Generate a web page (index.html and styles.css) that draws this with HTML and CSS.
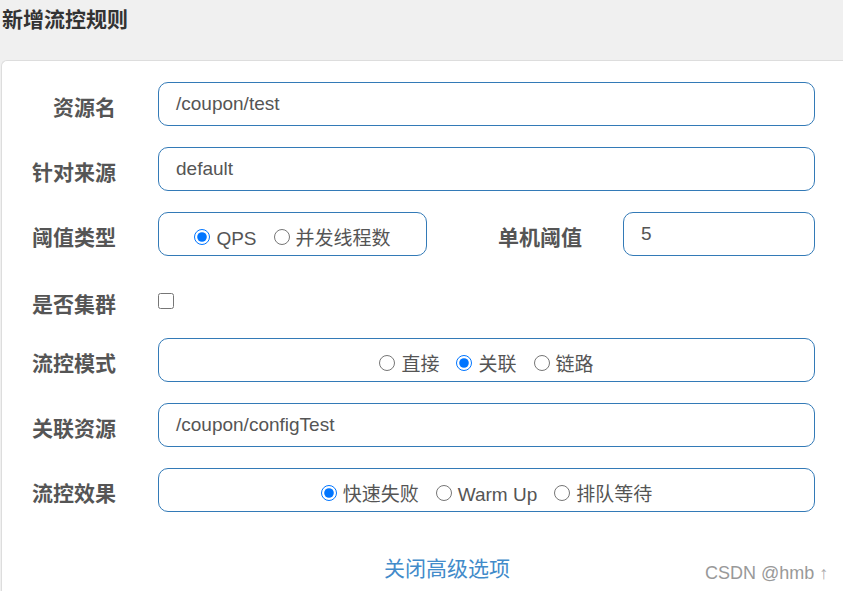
FILE: index.html
```html
<!DOCTYPE html>
<html lang="zh">
<head>
<meta charset="utf-8">
<title>新增流控规则</title>
<link rel="stylesheet" href="styles.css">
</head>
<body>
<div class="header"><h1 class="title">新增流控规则</h1></div>
<div class="panel">
  <div class="row">
    <label class="label">资源名</label>
    <div class="field full"><span class="value">/coupon/test</span></div>
  </div>
  <div class="row">
    <label class="label">针对来源</label>
    <div class="field full"><span class="value">default</span></div>
  </div>
  <div class="row">
    <label class="label">阈值类型</label>
    <div class="field type radios">
      <label class="opt"><input type="radio" name="grade" checked>QPS</label>
      <label class="opt"><input type="radio" name="grade">并发线程数</label>
    </div>
    <label class="label label-mid">单机阈值</label>
    <div class="field count"><span class="value">5</span></div>
  </div>
  <div class="row row-check">
    <label class="label">是否集群</label>
    <input class="check" type="checkbox">
  </div>
  <div class="row">
    <label class="label">流控模式</label>
    <div class="field full radios">
      <label class="opt"><input type="radio" name="mode">直接</label>
      <label class="opt"><input type="radio" name="mode" checked>关联</label>
      <label class="opt"><input type="radio" name="mode">链路</label>
    </div>
  </div>
  <div class="row">
    <label class="label">关联资源</label>
    <div class="field full"><span class="value">/coupon/configTest</span></div>
  </div>
  <div class="row">
    <label class="label">流控效果</label>
    <div class="field full radios">
      <label class="opt"><input type="radio" name="effect" checked>快速失败</label>
      <label class="opt"><input type="radio" name="effect">Warm Up</label>
      <label class="opt"><input type="radio" name="effect">排队等待</label>
    </div>
  </div>
  <div class="advanced"><a class="link">关闭高级选项</a></div>
</div>
<div class="watermark">CSDN @hmb <span class="arrow">↑</span></div>
</body>
</html>
```
FILE: styles.css
```css
html, body {
  margin: 0;
  padding: 0;
  height: 100%;
  overflow: hidden;
}
body {
  background: #f0f0f0;
  font-family: "Liberation Sans", "Noto Sans CJK SC", sans-serif;
  color: #555;
  position: relative;
}
.header {
  height: 60px;
  padding-left: 2px;
  box-sizing: border-box;
}
.title {
  margin: 0;
  padding-top: 4px;
  font-family: "Noto Sans CJK SC", sans-serif;
  font-size: 21px;
  font-weight: 700;
  line-height: 28px;
  color: #333;
}
.panel {
  margin-left: 1px;
  height: calc(100% - 60px);
  background: #fff;
  border: 1px solid #ddd;
  border-right: none;
  border-bottom: none;
  border-radius: 6px 0 0 0;
  padding-top: 21px;
  box-sizing: border-box;
}
.row {
  display: flex;
  align-items: center;
  height: 44px;
  margin-bottom: 21px;
}
.row-check {
  height: 48px;
  margin-bottom: 13px;
}
.label {
  width: 114px;
  margin-right: 42px;
  flex: none;
  text-align: right;
  font-family: "Noto Sans CJK SC", sans-serif;
  font-size: 21px;
  font-weight: 700;
  color: #555;
  padding-top: 4px;
  line-height: 28px;
}
.label-mid {
  width: 155px;
  margin-right: 41px;
}
.field {
  box-sizing: border-box;
  height: 44px;
  border: 1px solid #337ab7;
  border-radius: 10px;
  display: flex;
  align-items: center;
  padding-left: 17px;
  font-size: 19px;
  color: #555;
  flex: none;
}
.full { width: 657px; }
.type { width: 269px; }
.count { width: 192px; }
.value { line-height: 24px; }
.radios {
  justify-content: center;
  padding-left: 0;
  gap: 17px;
  font-family: "Liberation Sans", "Noto Sans CJK SC", sans-serif;
  color: #555;
}
.opt {
  display: flex;
  align-items: center;
  padding-top: 9px;
  line-height: 24px;
}
.opt input {
  width: 16px;
  height: 16px;
  margin: 0 6px 4px 0;
}
.check {
  width: 16px;
  height: 16px;
  margin: 0;
}
.advanced {
  padding-left: 382px;
  padding-top: 19px;
}
.link {
  font-family: "Noto Sans CJK SC", sans-serif;
  font-size: 21px;
  color: #428bca;
  line-height: 30px;
}
.watermark {
  position: absolute;
  left: 705px;
  top: 561px;
  font-size: 18px;
  color: #999;
  line-height: 24px;
}
.arrow { color: #aaa; }
```
